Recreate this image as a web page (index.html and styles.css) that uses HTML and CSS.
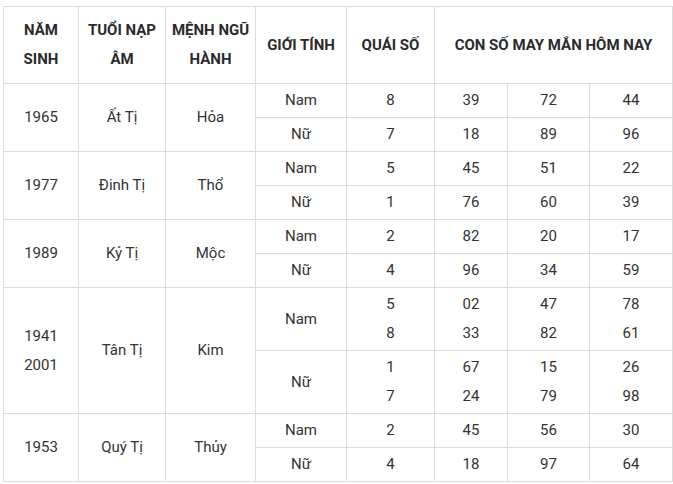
FILE: index.html
```html
<!DOCTYPE html>
<html lang="vi">
<head>
<meta charset="utf-8">
<link rel="stylesheet" href="styles.css">
</head>
<body>
<table class="lucky">
  <colgroup>
    <col class="c1"><col class="c2"><col class="c3"><col class="c4"><col class="c5"><col class="c6"><col class="c7"><col class="c8">
  </colgroup>
  <thead>
    <tr class="head">
      <th>NĂM<br>SINH</th>
      <th>TUỔI NẠP<br>ÂM</th>
      <th>MỆNH NGŨ<br>HÀNH</th>
      <th>GIỚI TÍNH</th>
      <th>QUÁI SỐ</th>
      <th colspan="3">CON SỐ MAY MẮN HÔM NAY</th>
    </tr>
  </thead>
  <tbody>
    <tr class="r"><td rowspan="2">1965</td><td rowspan="2">Ất Tị</td><td rowspan="2">Hỏa</td><td>Nam</td><td>8</td><td>39</td><td>72</td><td>44</td></tr>
    <tr class="r"><td>Nữ</td><td>7</td><td>18</td><td>89</td><td>96</td></tr>
    <tr class="r"><td rowspan="2">1977</td><td rowspan="2">Đinh Tị</td><td rowspan="2">Thổ</td><td>Nam</td><td>5</td><td>45</td><td>51</td><td>22</td></tr>
    <tr class="r"><td>Nữ</td><td>1</td><td>76</td><td>60</td><td>39</td></tr>
    <tr class="r"><td rowspan="2">1989</td><td rowspan="2">Kỷ Tị</td><td rowspan="2">Mộc</td><td>Nam</td><td>2</td><td>82</td><td>20</td><td>17</td></tr>
    <tr class="r"><td>Nữ</td><td>4</td><td>96</td><td>34</td><td>59</td></tr>
    <tr class="t"><td rowspan="2">1941<br>2001</td><td rowspan="2">Tân Tị</td><td rowspan="2">Kim</td><td>Nam</td><td>5<br>8</td><td>02<br>33</td><td>47<br>82</td><td>78<br>61</td></tr>
    <tr class="t"><td>Nữ</td><td>1<br>7</td><td>67<br>24</td><td>15<br>79</td><td>26<br>98</td></tr>
    <tr class="r"><td rowspan="2">1953</td><td rowspan="2">Quý Tị</td><td rowspan="2">Thủy</td><td>Nam</td><td>2</td><td>45</td><td>56</td><td>30</td></tr>
    <tr class="r"><td>Nữ</td><td>4</td><td>18</td><td>97</td><td>64</td></tr>
  </tbody>
</table>
</body>
</html>
```
FILE: styles.css
```css
html, body {
  margin: 0;
  background: #fff;
}
body {
  padding: 6px 0 0 3px;
  font-family: Roboto, "Noto Sans", Arial, sans-serif;
  font-size: 15px;
  color: #333;
}
.lucky {
  border-collapse: collapse;
  table-layout: fixed;
  width: 669px;
}
.c1 { width: 75px; }
.c2 { width: 87px; }
.c3 { width: 90px; }
.c4 { width: 91px; }
.c5 { width: 88px; }
.c6 { width: 73px; }
.c7 { width: 82px; }
.c8 { width: 83px; }
.lucky th,
.lucky td {
  border: 1px solid #dcdcdc;
  text-align: center;
  vertical-align: middle;
  padding: 0;
  line-height: 29px;
}
.lucky th {
  font-weight: 700;
  color: #2b2b2b;
  height: 76px;
}
.r td { height: 33px; }
.t td { height: 62px; }
```
